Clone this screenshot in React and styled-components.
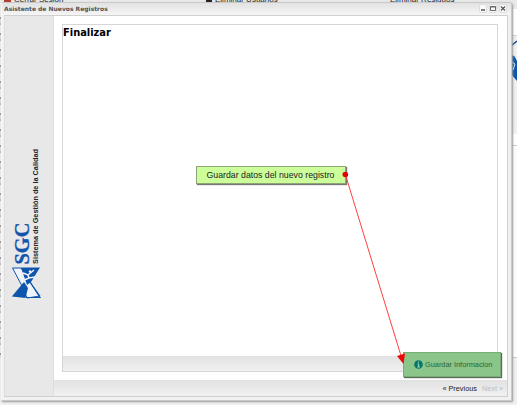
import React from "react";
import styled, { createGlobalStyle } from "styled-components";

const Global = createGlobalStyle`
  * { box-sizing: border-box; }
  body { margin: 0; overflow: hidden; background: #f0f0f0; }
`;

const Desktop = styled.div`
  position: relative;
  width: 517px;
  height: 405px;
  overflow: hidden;
  background: #f0f0f0;
  font-family: "Liberation Sans", Arial, sans-serif;
`;

const Toolbar = styled.div`
  display: flex;
  height: 9px;
  background: #e9e9e9;
  overflow: hidden;
`;

const ToolItem = styled.div`
  display: flex;
  align-items: flex-end;
  flex: 0 0 ${(p) => p.$width}px;
  height: 4px;
  padding-left: ${(p) => p.$indent}px;
  font-size: 8px;
  line-height: 9px;
  letter-spacing: 0;
  white-space: nowrap;
  color: #222;
`;

const ToolMark = styled.span`
  width: ${(p) => p.$width}px;
  height: 4px;
  margin-right: 3px;
  border-radius: 0 0 2px 2px;
  background: ${(p) => p.$color};
`;

const PageColumns = styled.div`
  display: flex;
  justify-content: space-between;
  height: 349px;
`;

const LeftEdge = styled.div`
  width: 1px;
  background: repeating-linear-gradient(#ededed 0 8px, #999 8px 10px, #ddd 10px 14px, #bbb 14px 16px);
`;

const RightEdge = styled.div`
  display: flex;
  flex-direction: column;
  width: 6px;
  background: #fcfdff;
`;

const EdgeBlock = styled.div`
  height: ${(p) => p.$height}px;
  background: ${(p) => p.$color};
  border-bottom: 1px solid ${(p) => p.$line || p.$color};
`;

const EdgeLogo = styled.svg`
  position: absolute;
  left: 511px;
  top: 38px;
`;

const Window = styled.section`
  position: absolute;
  left: 1px;
  top: 2px;
  width: 511px;
  height: 399px;
  display: flex;
  flex-direction: column;
  padding: 0 3px 3px 2px;
  background: #f1f1f1;
  border: 1px solid #c9c9c9;
  border-left-color: #f8f8f8;
  border-radius: 3px 3px 0 0;
  box-shadow: 1px 1px 2px #999;
`;

const TitleBar = styled.header`
  display: flex;
  align-items: center;
  justify-content: space-between;
  height: 12px;
  flex: none;
  margin: 0 -3px 0 -2px;
  padding: 0 4px 1px 2px;
  background: linear-gradient(#e2e2e2, #f5f5f5);
`;

const WindowTitle = styled.h1`
  margin: 0;
  font: bold 6px/12px "DejaVu Sans", sans-serif;
  color: #555;
  white-space: nowrap;
`;

const Controls = styled.div`
  display: flex;
  gap: 2px;
`;

const ControlButton = styled.button`
  width: 8px;
  height: 9px;
  padding: 0;
  border: 1px solid #ddd;
  border-radius: 2px;
  background: #fafafa;
  svg { display: block; }
`;

const Content = styled.div`
  display: flex;
  flex: 1;
  min-height: 0;
  border: 1px solid #d0d0d0;
  border-left-color: #dedede;
`;

const Sidebar = styled.aside`
  width: 49px;
  flex: none;
  padding-top: 132px;
  background: #e8e8e8;
  border-right: 1px solid #dedede;
`;

const Logo = styled.svg`
  display: block;
  margin-left: 6px;
`;

const Main = styled.main`
  display: flex;
  flex-direction: column;
  flex: 1;
  background: #fff;
`;

const Panel = styled.div`
  display: flex;
  flex-direction: column;
  flex: 1;
  margin: 8px 9px 8px 8px;
  border: 1px solid #d6d6d6;
`;

const Heading = styled.h2`
  flex: 1;
  margin: 0;
  padding-top: 1px;
  font: bold 9.9px/14px "DejaVu Sans", sans-serif;
  color: #000;
`;

const PanelFooter = styled.div`
  height: 15px;
  background: linear-gradient(#e2e2e2, #f0f0f0);
`;

const Pager = styled.footer`
  display: flex;
  justify-content: flex-end;
  align-items: flex-end;
  gap: 5px;
  height: 16px;
  padding-right: 4px;
  background: linear-gradient(#e2e2e2, #f0f0f0);
`;

const PagerLink = styled.span`
  font-size: 7.3px;
  line-height: 15px;
  color: ${(p) => (p.$disabled ? "#bdbdbd" : "#222")};
`;

const Callout = styled.div`
  position: absolute;
  left: 196px;
  top: 166px;
  width: 150px;
  height: 18px;
  padding-left: 9.5px;
  border: 1px solid #8fa476;
  background: #ccff99;
  box-shadow: 1px 1px 1px #777;
  font-size: 8.75px;
  line-height: 17px;
  white-space: nowrap;
  color: #222;
`;

const SaveHighlight = styled.div`
  position: absolute;
  left: 403px;
  top: 352px;
  width: 98px;
  height: 25px;
  display: flex;
  align-items: center;
  gap: 2px;
  padding-left: 10px;
  border: 1px solid #76ae73;
  background: #8bc58a;
  box-shadow: 1px 1px 1px #5b6a5b;
  font-size: 7.35px;
  white-space: nowrap;
  color: #26653c;
`;

const Arrow = styled.svg`
  position: absolute;
  left: 0;
  top: 0;
  pointer-events: none;
`;

export default function App() {
  return (
    <Desktop>
      <Global />
      <Toolbar>
        <ToolItem $width={204} $indent={4}>
          <ToolMark $width={7} $color="#b63b2c" />Cerrar Sesion
        </ToolItem>
        <ToolItem $width={176} $indent={2}>
          <ToolMark $width={6} $color="#222" />Eliminar Usuarios
        </ToolItem>
        <ToolItem $width={137} $indent={10}>Eliminar Residuos</ToolItem>
      </Toolbar>
      <PageColumns>
        <LeftEdge />
        <RightEdge>
          <EdgeBlock $height={27} $color="#ffffff" $line="#d5d5d5" />
          <EdgeBlock $height={98} $color="#f0f0f0" />
          <EdgeBlock $height={12} $color="#ffffff" $line="#ccc" />
          <EdgeBlock $height={212} $color="#fbfcfe" $line="#ccc" />
        </RightEdge>
      </PageColumns>
      <EdgeLogo width="6" height="45" viewBox="0 0 6 45">
        <path d="M0 8L6 3" stroke="#174a98" strokeWidth="1.5" />
        <path d="M0 17C4 17 5 21 6 23V43C4 41 2 38 0 36Z" fill="#0c57ad" />
        <path d="M1 24L4 26L2 32" stroke="#d7e8fa" fill="none" />
      </EdgeLogo>

      <Window>
        <TitleBar>
          <WindowTitle>Asistente de Nuevos Registros</WindowTitle>
          <Controls>
            <ControlButton aria-label="Minimizar">
              <svg width="6" height="7"><path d="M1 5H5" stroke="#555" strokeWidth="1.5" /></svg>
            </ControlButton>
            <ControlButton aria-label="Maximizar">
              <svg width="6" height="7"><path d="M.5 1.5H5.5V5.5H.5ZM.5 2H5.5" fill="none" stroke="#666" /></svg>
            </ControlButton>
            <ControlButton aria-label="Cerrar">
              <svg width="6" height="7"><path d="M1 1.5L5 5.5M5 1.5L1 5.5" stroke="#555" strokeWidth="1.2" /></svg>
            </ControlButton>
          </Controls>
        </TitleBar>
        <Content>
          <Sidebar>
            <Logo width="32" height="152" viewBox="0 0 32 152">
              <text transform="translate(26.5 116) rotate(-90)" fontFamily="Liberation Sans, sans-serif" fontWeight="bold" fontSize="7.6" textLength="115" lengthAdjust="spacingAndGlyphs" fill="#222">Sistema de Gestión de la Calidad</text>
              <text transform="translate(17.5 116.5) rotate(-90)" fontFamily="Liberation Serif, serif" fontWeight="bold" fontSize="22" textLength="42" lengthAdjust="spacingAndGlyphs" fill="#1454ab" stroke="#1454ab" strokeWidth=".3">SGC</text>
              <path d="M1.500 120H10L19 134L29 148L16 150L11 138Z" fill="#f0f4fa" stroke="#0e54ab" />
              <path d="M10 119.500H29L20 134L16 137Z" fill="#0e54ab" />
              <path d="M13 134L17 140L14.500 150L.8 148.500Z" fill="#0e54ab" />
              <path d="M19 134L29 149.500H15" fill="none" stroke="#0e54ab" strokeWidth="1.200" />
              <path d="M12 125L17 127L23 122M17 127L18 130L24 129M18 130L13 132" fill="none" stroke="#eef5ff" strokeWidth="1.500" />
              <circle cx="19" cy="123.500" r="1.200" fill="#eef5ff" />
            </Logo>
          </Sidebar>
          <Main>
            <Panel>
              <Heading>Finalizar</Heading>
              <PanelFooter />
            </Panel>
            <Pager>
              <PagerLink>« Previous</PagerLink>
              <PagerLink $disabled>Next »</PagerLink>
            </Pager>
          </Main>
        </Content>
      </Window>

      <Callout>Guardar datos del nuevo registro</Callout>
      <SaveHighlight>
        <svg width="9" height="9" viewBox="0 0 9 9">
          <circle cx="4.500" cy="4.500" r="4.300" fill="#08766c" />
          <path d="M4.500 1.500V2.700M3.500 4H4.700V7M3.300 7H5.900" fill="none" stroke="#a8dfb0" />
        </svg>
        Guardar Informacion
      </SaveHighlight>
      <Arrow width="517" height="405">
        <path d="M345.500 175L402 359" stroke="#ff4040" strokeWidth="1" />
        <circle cx="345.300" cy="174.500" r="2.800" fill="#e50000" />
        <path d="M397 356L405 353.500L403.500 364Z" fill="#e90909" />
      </Arrow>
    </Desktop>
  );
}
